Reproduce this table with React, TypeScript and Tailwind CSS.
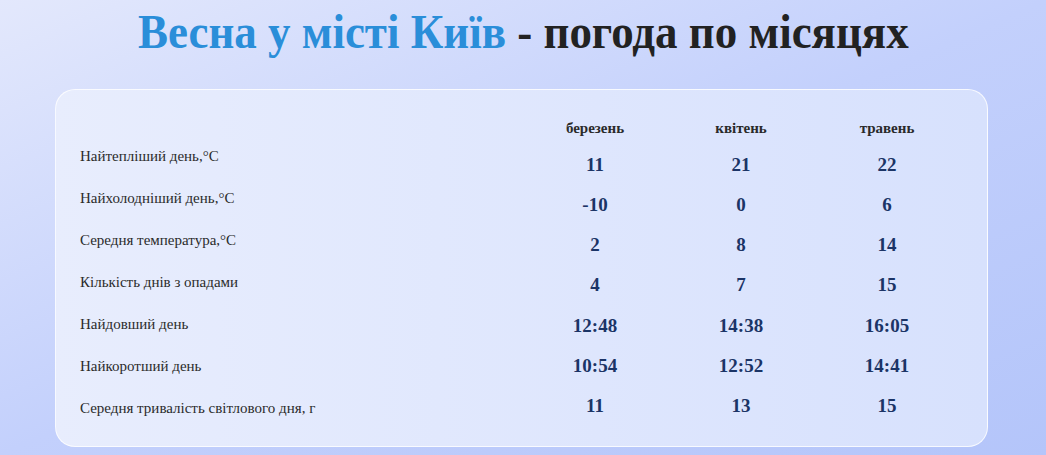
import React from "react";

const labels = [
  "Найтепліший день,°C",
  "Найхолодніший день,°C",
  "Середня температура,°C",
  "Кількість днів з опадами",
  "Найдовший день",
  "Найкоротший день",
  "Середня тривалість світлового дня, г",
];

const months = [
  { name: "березень", values: ["11", "-10", "2", "4", "12:48", "10:54", "11"] },
  { name: "квітень", values: ["21", "0", "8", "7", "14:38", "12:52", "13"] },
  { name: "травень", values: ["22", "6", "14", "15", "16:05", "14:41", "15"] },
];

export default function App() {
  return (
    <div
      className="w-[1046px] h-[455px] overflow-hidden bg-gradient-to-br from-[#e3e8fc] via-[#c3d0fc] to-[#b4c5fa] flex flex-col items-center"
      style={{ fontFamily: '"Liberation Serif", "Times New Roman", serif' }}
    >
      <h1 className="mt-[3px] h-[58px] text-[48px] leading-[58px] font-bold text-[#222222] whitespace-nowrap scale-x-[0.937]">
        <span className="text-[#2a8ed9]">Весна у місті Київ</span> - погода по місяцях
      </h1>
      <div className="mt-[28px] mr-[3px] w-[933px] rounded-[20px] border border-white/80 bg-gradient-to-r from-[#e8edfd] to-[#d7e1fd] pt-[28px] pb-[17px] pl-[24px] pr-[27px] flex">
        <div className="flex-1 pt-[17px] flex flex-col">
          {labels.map((l) => (
            <div key={l} className="h-[42px] flex items-center text-[15px] text-[#2b2b2b]">
              {l}
            </div>
          ))}
        </div>
        {months.map((m) => (
          <div key={m.name} className="w-[146px] flex flex-col items-center">
            <div className="h-[20px] flex items-center text-[15px] font-bold text-[#2a2a2a]">{m.name}</div>
            <div className="mt-[7px] flex flex-col items-center">
              {m.values.map((v, i) => (
                <div key={i} className="h-[40.2px] flex items-center text-[19px] font-bold text-[#1b3466]">
                  {v}
                </div>
              ))}
            </div>
          </div>
        ))}
      </div>
    </div>
  );
}
